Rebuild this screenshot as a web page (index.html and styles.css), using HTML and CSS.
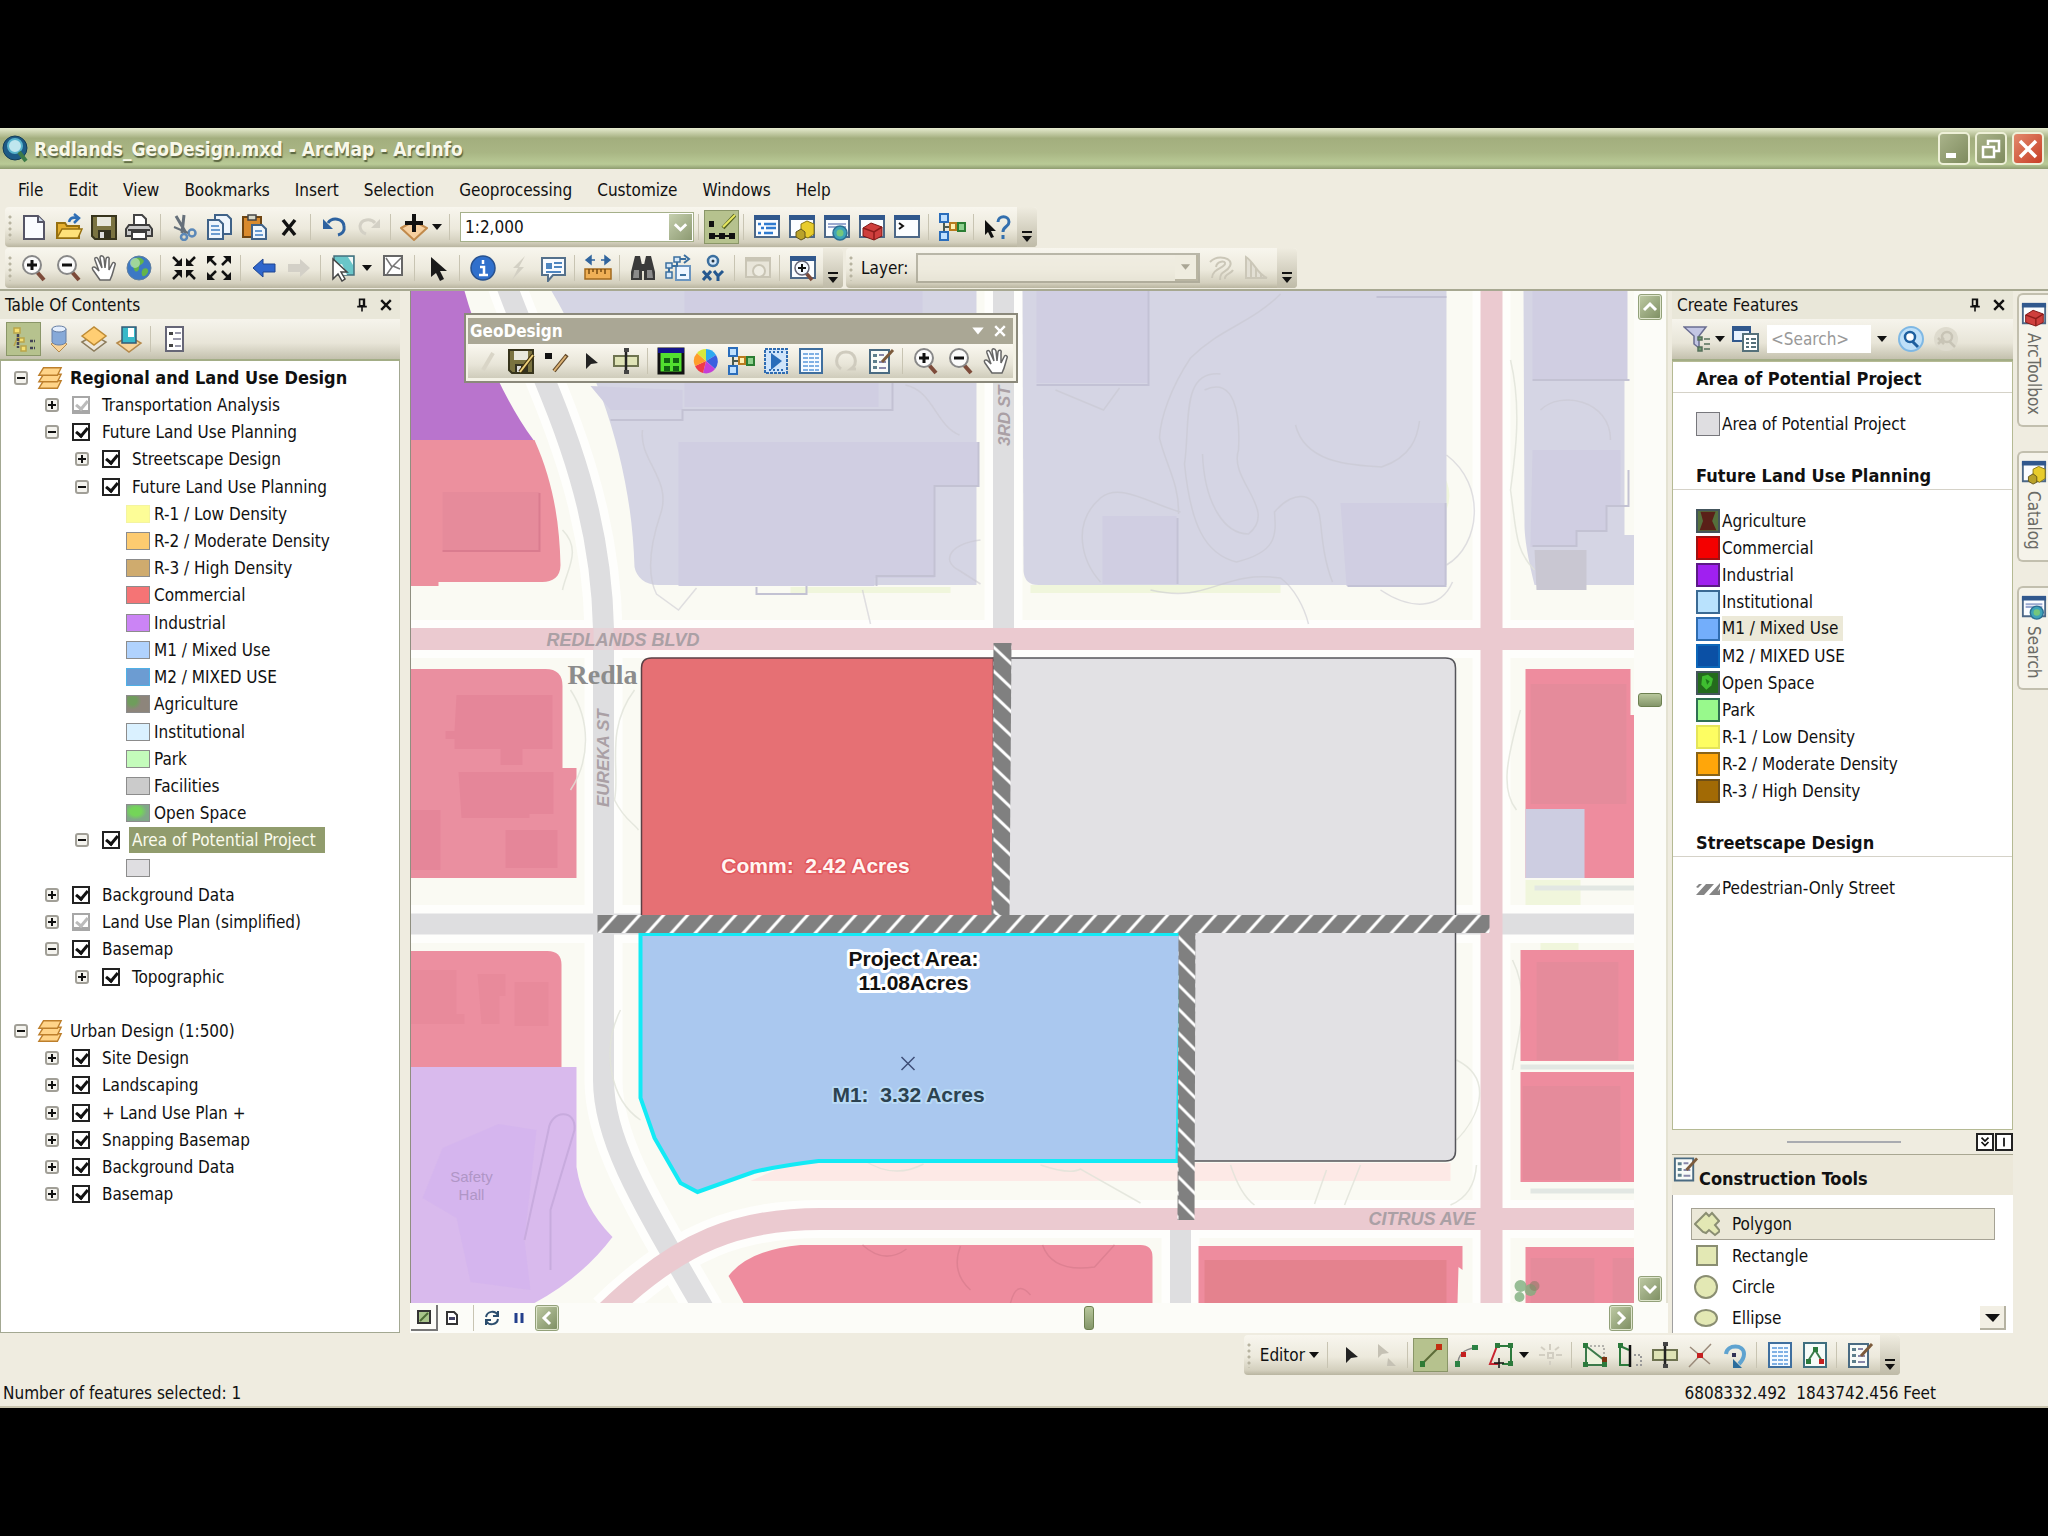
FILE: index.html
```html
<!DOCTYPE html>
<html lang="en">
<head>
    <meta charset="utf-8">
    <title>Redlands_GeoDesign.mxd - ArcMap - ArcInfo</title>
    <link rel="stylesheet" href="styles.css">
</head>
<body>
    <!-- icon sprite -->
    <svg class="sprite" aria-hidden="true">
        <symbol id="i-new" viewBox="0 0 28 28"><path d="M4 3h14l6 6v17H4z" fill="#fafcff" stroke="#556" stroke-width="2"/><path d="M18 3v6h6" fill="#cfdcec" stroke="#556" stroke-width="2"/></symbol>
        <symbol id="i-open" viewBox="0 0 28 28"><path d="M2 25V10h8l2 3h12v12z" fill="#e6b030" stroke="#97700f" stroke-width="2"/><path d="M2 25l5-9h20l-4 9z" fill="#ffe27a" stroke="#97700f" stroke-width="1.5"/><path d="M14 9c1-4 4-5 8-4M19 1l5 4-5 5" fill="none" stroke="#2f6fb5" stroke-width="2.5"/></symbol>
        <symbol id="i-save" viewBox="0 0 28 28"><path d="M2 3h24v23H5l-3-3z" fill="#7a7340" stroke="#37341c" stroke-width="2"/><path d="M7 4h14v9H7z" fill="#e8e8dc"/><path d="M8 17h13v8H8z" fill="#33311f"/><path d="M10 19h4v6h-4z" fill="#ddd"/></symbol>
        <symbol id="i-print" viewBox="0 0 28 28"><path d="M9 12V2h8l4 4v6" fill="#fff" stroke="#444" stroke-width="2"/><path d="M4 12h20l3 4v7H1v-7z" fill="#c9c9c9" stroke="#3d3d3d" stroke-width="2"/><path d="M7 19h14v7H7z" fill="#fff" stroke="#3d3d3d" stroke-width="2"/><path d="M3 17h22" stroke="#3d3d3d" stroke-width="2"/></symbol>
        <symbol id="i-cut" viewBox="0 0 28 28"><path d="M6 3l10 17M14 2l-2 18" stroke="#66707a" stroke-width="3" fill="none"/><circle cx="22" cy="20" r="3.5" fill="none" stroke="#5b88b8" stroke-width="2.5"/><circle cx="14" cy="24" r="3" fill="none" stroke="#5b88b8" stroke-width="2.5"/><path d="M4 14l14 6" stroke="#66707a" stroke-width="2"/></symbol>
        <symbol id="i-copy" viewBox="0 0 28 28"><path d="M10 2h12l4 4v15H10z" fill="#eef5fc" stroke="#3f6288" stroke-width="2"/><path d="M3 7h11l4 4v15H3z" fill="#eef5fc" stroke="#3f6288" stroke-width="2"/><path d="M6 13h8M6 17h9M6 21h9" stroke="#6a9bd0" stroke-width="2"/></symbol>
        <symbol id="i-paste" viewBox="0 0 28 28"><path d="M3 4h18v20H3z" fill="#d98a2d" stroke="#6f4512" stroke-width="2"/><path d="M8 2h8v5H8z" fill="#d8d8c8" stroke="#444" stroke-width="1.5"/><path d="M12 12h10l4 4v10H12z" fill="#eef5fc" stroke="#3f6288" stroke-width="2"/><path d="M15 18h7M15 22h8" stroke="#6a9bd0" stroke-width="2"/></symbol>
        <symbol id="i-delete" viewBox="0 0 28 28"><path d="M8 7l12 15M20 7L8 22" stroke="#111" stroke-width="3.5"/></symbol>
        <symbol id="i-undo" viewBox="0 0 28 28"><path d="M8 10c4-6 15-5 16 3 1 5-2 8-6 9" fill="none" stroke="#2d62a0" stroke-width="3"/><path d="M3 6v10h10z" fill="#2d62a0"/></symbol>
        <symbol id="i-redo" viewBox="0 0 28 28"><path d="M20 10C16 5 6 6 5 13c0 5 3 7 6 8" fill="none" stroke="#d3d0c5" stroke-width="3"/><path d="M25 6v9h-9z" fill="#d3d0c5"/></symbol>
        <symbol id="i-add" viewBox="0 0 28 28"><path d="M1 15l13-7 13 7-13 12z" fill="#f6d0a0" stroke="#c18a4c" stroke-width="2"/><path d="M14 1v18M5 10h18" stroke="#111" stroke-width="4"/></symbol>
        <symbol id="i-edit" viewBox="0 0 28 28"><path d="M1 8h5v6H1zM1 20h6v6H1zM11 20h6v6h-6zM21 20h6v6h-6z" fill="#111"/><path d="M5 23h20" stroke="#111" stroke-width="2"/><path d="M15 15L27 2" stroke="#53611f" stroke-width="4"/><path d="M15 14L27 2" stroke="#e8e860" stroke-width="2"/></symbol>
        <symbol id="i-win" viewBox="0 0 28 28"><path d="M2 4h24v20H2z" fill="#fbfdff" stroke="#4d6887" stroke-width="2"/><path d="M1 2h26v5H1z" fill="#31588d"/></symbol>
        <symbol id="i-toc" viewBox="0 0 28 28"><use href="#i-win"/><path d="M5 11h3M11 11h12M8 15h3M13 15h10M5 20h3M11 20h9" stroke="#2f7bd0" stroke-width="2.5"/></symbol>
        <symbol id="i-catalog" viewBox="0 0 28 28"><use href="#i-win"/><path d="M13 11l6-3 7 3v10l-6 4-7-3z" fill="#e8cc2c" stroke="#8a7711"/><path d="M8 19l5-3 4 3v6l-4 2-5-3z" fill="#b9a22a" stroke="#62551a"/></symbol>
        <symbol id="i-search" viewBox="0 0 28 28"><use href="#i-win"/><path d="M5 11h18M5 14h18" stroke="#9aa9d0" stroke-width="2"/><circle cx="17" cy="20" r="7" fill="#3fa3b8" stroke="#2a6f93" stroke-width="1.5"/><circle cx="17" cy="20" r="3.5" fill="#74c77c"/></symbol>
        <symbol id="i-toolbox" viewBox="0 0 28 28"><use href="#i-win"/><path d="M5 15l8-5 11 4v9l-8 4-11-4z" fill="#cf3f3d" stroke="#7d1614"/><path d="M5 15l11 4 8-5M16 19v8" fill="none" stroke="#8d1c1a" stroke-width="1.5"/></symbol>
        <symbol id="i-python" viewBox="0 0 28 28"><use href="#i-win"/><path d="M6 10l4 3-4 3" fill="none" stroke="#111" stroke-width="2"/></symbol>
        <symbol id="i-model" viewBox="0 0 28 28"><path d="M6 8v12M6 14h16" stroke="#4b5b50" stroke-width="2"/><path d="M2 1h8v8H2zM2 19h8v8H2z" fill="#bfe0ff" stroke="#2a6dbb" stroke-width="2"/><path d="M12 10h6v7h-6z" fill="#fff0b0" stroke="#b97b1f" stroke-width="2"/><path d="M20 10h7v8h-7z" fill="#8fd08f" stroke="#2b7d33" stroke-width="2"/></symbol>
        <symbol id="i-help" viewBox="0 0 28 28"><path d="M2 7v15l3-3 3 6 3-1-3-6h5z" fill="#111"/><path d="M15 9c0-7 11-7 11 0 0 5-6 4-6 10M20 22v4" fill="none" stroke="#336fae" stroke-width="3"/></symbol>
        <symbol id="i-zoomin" viewBox="0 0 28 28"><path d="M17 18l7 8" stroke="#7d4b3a" stroke-width="4"/><circle cx="12" cy="11" r="9" fill="#fbfbfb" stroke="#888" stroke-width="2"/><path d="M12 6v10M7 11h10" stroke="#111" stroke-width="3"/></symbol>
        <symbol id="i-zoomout" viewBox="0 0 28 28"><path d="M17 18l7 8" stroke="#7d4b3a" stroke-width="4"/><circle cx="12" cy="11" r="9" fill="#fbfbfb" stroke="#888" stroke-width="2"/><path d="M7 11h10" stroke="#111" stroke-width="3"/></symbol>
        <symbol id="i-hand" viewBox="0 0 28 28"><path d="M10 26L3 16c-2-3 1-4 3-2l3 3-4-11c-1-3 2-3 3-1l4 9-2-10c0-3 3-3 4 0l1 10 1-9c1-3 4-2 3 1l0 10 3-6c1-3 4-1 3 1-2 6-2 9-5 15z" fill="#fff" stroke="#666" stroke-width="1.5"/></symbol>
        <symbol id="i-globe" viewBox="0 0 28 28"><circle cx="14" cy="14" r="12" fill="#3c78c4" stroke="#5f7f9f"/><path d="M7 6c5-4 10-3 12 1-1 4-5 3-5 7s-4 5-5 1-5-4-2-9zM18 15c3-2 6 0 5 3s-5 6-6 3 0-4 1-6z" fill="#63b54a"/><circle cx="10" cy="9" r="5" fill="#c9ecd0" opacity=".6"/></symbol>
        <symbol id="i-fixin" viewBox="0 0 28 28"><path d="M3 3l6 6M25 3l-6 6M3 25l6-6M25 25l-6-6" stroke="#111" stroke-width="2.5"/><path d="M12 4v8H4zM16 4v8h8zM12 24v-8H4zM16 24v-8h8z" fill="#111"/></symbol>
        <symbol id="i-fixout" viewBox="0 0 28 28"><path d="M4 4l7 7M24 4l-7 7M4 24l7-7M24 24l-7-7" stroke="#111" stroke-width="2.5"/><path d="M2 2h8l-8 8zM26 2h-8l8 8zM2 26h8l-8-8zM26 26h-8l8-8z" fill="#111"/></symbol>
        <symbol id="i-back" viewBox="0 0 28 28"><path d="M3 14l10-9v5h12v8H13v5z" fill="#2f66cc" stroke="#1e4590"/></symbol>
        <symbol id="i-fwd" viewBox="0 0 28 28"><path d="M25 14L15 5v5H3v8h12v5z" fill="#d3d0c7"/></symbol>
        <symbol id="i-selfeat" viewBox="0 0 28 28"><path d="M4 2h20v19H4z" fill="#6ac6c9" stroke="#44707e" stroke-width="1.5"/><path d="M4 12l8-2 5 11H4z" fill="#f0f8f8"/><path d="M18 3h5v8z" fill="#f0f8f8"/><path d="M3 5v20l5-5 4 7 3-2-4-7h6z" fill="#fff" stroke="#444" stroke-width="1.5"/></symbol>
        <symbol id="i-clear" viewBox="0 0 28 28"><path d="M5 2h18v19H5z" fill="#fff" stroke="#666" stroke-width="2"/><path d="M7 4l6 9 9-9M13 13l-5 7M14 12l7 3" fill="none" stroke="#777" stroke-width="1.5"/></symbol>
        <symbol id="i-pointer" viewBox="0 0 28 28"><path d="M7 3v20l5-4 4 8 4-2-4-8h7z" fill="#1a1a1a"/></symbol>
        <symbol id="i-info" viewBox="0 0 28 28"><circle cx="14" cy="14" r="12" fill="#3070cc" stroke="#27518e" stroke-width="1.5"/><path d="M14 6v4M11 13h4v8M10 21h9" fill="none" stroke="#fff" stroke-width="2.5"/></symbol>
        <symbol id="i-bolt" viewBox="0 0 28 28"><path d="M21 2L9 14h5L8 26l12-13h-5z" fill="#d3d0c4"/></symbol>
        <symbol id="i-popup" viewBox="0 0 28 28"><path d="M3 4h23v17H14l-5 6v-6H3z" fill="#f8fbff" stroke="#54708b" stroke-width="2"/><path d="M7 9h6v6H7z" fill="#4f86c0"/><path d="M15 9h8M15 13h8M7 18h15" stroke="#4f86c0" stroke-width="2"/></symbol>
        <symbol id="i-measure" viewBox="0 0 28 28"><path d="M2 6l5-4v8zM26 6l-5-4v8zM6 6h5M17 6h5" fill="#31659e" stroke="#31659e" stroke-width="1.5"/><path d="M1 15h26v10H1z" fill="#efb056" stroke="#a2691e" stroke-width="1.5"/><path d="M5 15v5M9 15v3M13 15v5M17 15v3M21 15v5" stroke="#7a4c10" stroke-width="1.5"/></symbol>
        <symbol id="i-find" viewBox="0 0 28 28"><path d="M6 2h5l2 9v15H2v-8zM22 2h-5l-2 9v15h11v-8z" fill="#3a3a3a"/><path d="M12 10h4v7h-4z" fill="#3a3a3a"/><path d="M5 16h5v8H4zM18 16h5l1 8h-6z" fill="#8b8b8b"/></symbol>
        <symbol id="i-route" viewBox="0 0 28 28"><path d="M12 12h14v14H12z" fill="#eef6ff" stroke="#6b95bf" stroke-width="2"/><path d="M5 20v-8h8V5h9M20 1l5 4-5 4" fill="none" stroke="#3b6f9f" stroke-width="2"/><path d="M2 18h6v6H2zM2 9h6v5H2zM10 3h6v5h-6z" fill="#d7e8f8" stroke="#3b6f9f" stroke-width="1.5"/><path d="M16 21h6" stroke="#3b6f9f" stroke-width="2"/></symbol>
        <symbol id="i-xy" viewBox="0 0 28 28"><circle cx="14" cy="7" r="5" fill="#d7e8f8" stroke="#3b6f9f" stroke-width="2.5"/><circle cx="14" cy="7" r="1.5" fill="#234"/><path d="M4 17l8 9M12 17l-8 9M15 17l4 5 5-5M19 21v6" fill="none" stroke="#25588f" stroke-width="3"/></symbol>
        <symbol id="i-time" viewBox="0 0 28 28"><path d="M2 4h24v19H2z" fill="#e8e5d9" stroke="#c9c5b5" stroke-width="2"/><path d="M2 6h24" stroke="#c9c5b5" stroke-width="3"/><circle cx="15" cy="17" r="6" fill="#efede3" stroke="#c9c5b5" stroke-width="2"/></symbol>
        <symbol id="i-viewer" viewBox="0 0 28 28"><use href="#i-win"/><path d="M17 19l6 7" stroke="#7d4b3a" stroke-width="3.5"/><circle cx="13" cy="14" r="7" fill="#f5f9ff" stroke="#667" stroke-width="1.5"/><path d="M13 10v8M9 14h8" stroke="#111" stroke-width="2"/></symbol>
        <symbol id="i-contour" viewBox="0 0 28 28"><path d="M3 8c8-8 24-4 20 4s-10 4-10 14M5 24c0-9 12-10 13-14s-8-3-9 3M18 25c-1-5 6-5 8-9" fill="none" stroke="#cbc7b8" stroke-width="2"/></symbol>
        <symbol id="i-profile" viewBox="0 0 28 28"><path d="M4 3v21h21C15 20 12 8 4 3zM9 8v16M14 14v10M19 20v4" fill="#e2dfd4" stroke="#cbc7b8" stroke-width="2"/></symbol>
        <symbol id="i-bysrc" viewBox="0 0 28 28"><path d="M6 19l8-5 8 5-8 8z" fill="#f8d49a" stroke="#b58a4c"/><path d="M7 4v13c2 4 12 4 14 0V4z" fill="#86a9d8" stroke="#667fa5"/><ellipse cx="14" cy="4" rx="7" ry="3" fill="#e4eefc" stroke="#667fa5"/></symbol>
        <symbol id="i-byvis" viewBox="0 0 28 28"><path d="M2 17l12-7 12 7-12 9z" fill="#ece7db" stroke="#8d7d5d" stroke-width="1.5"/><path d="M2 11l12-9 12 9-12 9z" fill="#ffce73" stroke="#bd8b35" stroke-width="1.5"/></symbol>
        <symbol id="i-bysel" viewBox="0 0 28 28"><path d="M2 18l12-7 12 7-12 9z" fill="#f8d49a" stroke="#b58a4c" stroke-width="1.5"/><path d="M7 2h14v16H7z" fill="#38b9c9" stroke="#335a76" stroke-width="1.5"/><path d="M13 3h6v9h-6z" fill="#fff"/></symbol>
        <symbol id="i-byorder" viewBox="0 0 28 28"><path d="M4 21l4-10M4 3h6v5H4zM9 13h5v4H9zM11 21h5v5h-5z" fill="#f5df70" stroke="#b9a54a" stroke-width="1.5"/><path d="M8 9v14M20 16h5M20 23h5" stroke="#445" stroke-width="2.5" stroke-dasharray="3 1"/></symbol>
        <symbol id="i-options" viewBox="0 0 28 28"><path d="M6 2h17v24H6z" fill="#fff" stroke="#667" stroke-width="2"/><path d="M9 7h4v3H9zM9 19h4v3H9z" fill="#444"/><path d="M15 8h6M13 14h8M15 21h6" stroke="#99a" stroke-width="2"/></symbol>
        <symbol id="i-frame" viewBox="0 0 28 28"><g fill="#ffd489" stroke="#bd7f2c" stroke-width="1.5"><path d="M7 17h19l-4 8H2z"/><path d="M7 10h19l-4 8H2z"/><path d="M7 3h19l-4 8H2z"/></g></symbol>
        <symbol id="i-pencil" viewBox="0 0 28 28"><path d="M11 23L21 6" stroke="#d9d5c7" stroke-width="4"/></symbol>
        <symbol id="i-saveedit" viewBox="0 0 28 28"><use href="#i-save"/><path d="M13 25L26 8" stroke="#41300f" stroke-width="4"/><path d="M13 25L26 8" stroke="#eed27b" stroke-width="2"/></symbol>
        <symbol id="i-sketch" viewBox="0 0 28 28"><path d="M3 6h7v6H3z" fill="#111"/><path d="M12 24L25 8" stroke="#614727" stroke-width="4"/><path d="M12 24L24 9" stroke="#dcb375" stroke-width="2"/></symbol>
        <symbol id="i-arrow" viewBox="0 0 28 28"><path d="M9 6v16l5-5 7-1z" fill="#222"/></symbol>
        <symbol id="i-arrow2" viewBox="0 0 28 28"><path d="M6 3v14l4-4 7-1zM16 17l8 8h-9z" fill="#c5c1b4"/></symbol>
        <symbol id="i-split" viewBox="0 0 28 28"><path d="M2 9h24v10H2z" fill="#dfe3b6" stroke="#6e7350" stroke-width="2"/><path d="M14 2v24" stroke="#222" stroke-width="2.5"/><path d="M12 1h5v4h-5zM12 23h5v4h-5z" fill="#444"/></symbol>
        <symbol id="i-grid" viewBox="0 0 28 28"><path d="M2 2h24v24H2z" fill="#52e02f" stroke="#111" stroke-width="3"/><path d="M1 1h26v5H1z" fill="#14148a"/><path d="M7 11h6v5H7zM16 11h6v5h-6zM7 19h6v5H7zM16 19h6v5h-6z" fill="#126312"/></symbol>
        <symbol id="i-color" viewBox="0 0 28 28"><path d="M14 14V2a12 12 0 0 1 10 6z" fill="#2fa9f0"/><path d="M14 14l10-6a12 12 0 0 1-1 14z" fill="#3a5fe0"/><path d="M14 14l9 8a12 12 0 0 1-12 4z" fill="#c33fd8"/><path d="M14 14l-3 12A12 12 0 0 1 3 19z" fill="#f03a48"/><path d="M14 14L3 19A12 12 0 0 1 5 6z" fill="#ff9d2b"/><path d="M14 14L5 6a12 12 0 0 1 9-4z" fill="#d8e83c"/></symbol>
        <symbol id="i-run" viewBox="0 0 28 28"><path d="M3 2h22v24H3z" fill="#cfe4fa" stroke="#2f6cb2" stroke-width="2" stroke-dasharray="3 1"/><path d="M7 5h14M7 23h14" stroke="#2f6cb2" stroke-width="2" stroke-dasharray="2 2"/><path d="M9 6l11 8-11 9z" fill="#2a6dba"/></symbol>
        <symbol id="i-table" viewBox="0 0 28 28"><path d="M3 2h22v24H3z" fill="#f5faff" stroke="#3f6f9f" stroke-width="2"/><path d="M6 7h16M6 11h16M6 15h16M6 19h16M6 23h16" stroke="#7fb0e4" stroke-width="2" stroke-dasharray="5 1"/></symbol>
        <symbol id="i-loop" viewBox="0 0 28 28"><path d="M9 22C1 16 5 5 14 5s13 11 5 17h5" fill="none" stroke="#cfcbbe" stroke-width="3"/></symbol>
        <symbol id="i-attr" viewBox="0 0 28 28"><path d="M3 3h19v23H3z" fill="#f8fbf8" stroke="#4a6b82" stroke-width="2"/><path d="M6 7h4v3H6zM6 13h4v3H6zM6 19h4v3H6z" fill="#5d7f8c"/><path d="M12 8h5M12 15h7M12 21h7" stroke="#88a" stroke-width="2"/><path d="M15 15L26 3" stroke="#7c5b3c" stroke-width="3"/></symbol>
        <symbol id="i-seg" viewBox="0 0 28 28"><path d="M6 22L22 6" stroke="#5b6b38" stroke-width="2"/><path d="M3 20h5v6H3z" fill="#2f7b35"/><path d="M19 3h6v6h-6z" fill="#c22f12"/></symbol>
        <symbol id="i-arc" viewBox="0 0 28 28"><path d="M6 23c0-9 6-15 17-16" fill="none" stroke="#888" stroke-width="1.5"/><path d="M3 20h5v6H3zM20 4h6v5h-6z" fill="#2c8244"/><path d="M9 11h5v5H9z" fill="#c42020"/></symbol>
        <symbol id="i-trace" viewBox="0 0 28 28"><path d="M10 5L3 23h8" fill="none" stroke="#c8232e" stroke-width="2"/><path d="M10 5h14v18h-9" fill="none" stroke="#2c7a3c" stroke-width="2"/><path d="M8 2h5v5H8zM21 2h5v5h-5zM21 20h5v5h-5z" fill="#2c7a3c"/><path d="M12 17v10M7 22h10" stroke="#111" stroke-width="1.5"/></symbol>
        <symbol id="i-point" viewBox="0 0 28 28"><path d="M12 12h5v5h-5zM14 3v6M14 20v4M3 14h6M20 14h6M5 6l4 3M23 6l-4 3" fill="none" stroke="#d2cec2" stroke-width="2"/></symbol>
        <symbol id="i-reshape" viewBox="0 0 28 28"><path d="M5 5l18 14v5H5z" fill="#eef3de" stroke="#3b7a4a" stroke-width="2"/><path d="M5 5h18v14" fill="none" stroke="#777" stroke-dasharray="2 2"/><path d="M2 2h5v5H2zM2 21h5v5H2zM21 21h5v5h-5z" fill="#2c7a3c"/><path d="M21 16h5v5h-5z" fill="#7b3412"/></symbol>
        <symbol id="i-cutpoly" viewBox="0 0 28 28"><path d="M4 5v19h9M4 5l9 4" fill="none" stroke="#2c7a3c" stroke-width="2"/><path d="M14 4v22" stroke="#111" stroke-width="2.5"/><path d="M18 14h7v10h-7" fill="none" stroke="#999" stroke-width="2" stroke-dasharray="2 2"/><path d="M2 2h5v5H2z" fill="#2c7a3c"/></symbol>
        <symbol id="i-inter" viewBox="0 0 28 28"><path d="M4 6l20 17M3 26L25 3" stroke="#9a8a7a" stroke-width="1.5"/><path d="M11 12h6v5h-6z" fill="#c42020"/></symbol>
        <symbol id="i-rotate" viewBox="0 0 28 28"><path d="M5 13c1-10 18-10 18 0 0 4-2 7-5 10" fill="none" stroke="#5fa3d0" stroke-width="4"/><path d="M12 18v9h9z" fill="#2a6d9c"/><path d="M11 12h4v4h-4z" fill="#335"/></symbol>
        <symbol id="i-vertex" viewBox="0 0 28 28"><path d="M3 2h22v24H3z" fill="#f6fbf8" stroke="#3f6f7f" stroke-width="2"/><path d="M7 20l7-11 7 11" fill="none" stroke="#3b7a4a" stroke-width="2"/><path d="M5 18h5v5H5zM12 6h5v5h-5z" fill="#2c7a3c"/><path d="M18 18h5v5h-5z" fill="#c42020"/></symbol>
        <symbol id="i-filter" viewBox="0 0 28 28"><path d="M1 2h22l-7 9v12l-5-4v-8z" fill="#c3c6e4" stroke="#6a6d91" stroke-width="1.5"/><path d="M15 12h4v3h-4zM15 22h4v4h-4zM21 14h6M21 19h6M21 24h6" fill="#6f9b72" stroke="#55705b" stroke-width="1.5"/></symbol>
        <symbol id="i-templ" viewBox="0 0 28 28"><path d="M1 2h17v14H1z" fill="#e8f2ff" stroke="#31588d" stroke-width="2"/><path d="M1 4h17" stroke="#31588d" stroke-width="4"/><path d="M11 9h15v17H11z" fill="#fff" stroke="#55707a" stroke-width="2"/><path d="M14 14h3M19 14h5M14 18h3M19 18h5M14 22h3M19 22h5" stroke="#55707a" stroke-width="2"/></symbol>
        <symbol id="i-lens" viewBox="0 0 28 28"><circle cx="14" cy="14" r="12" fill="#bfe0f8" stroke="#7fb8e4" stroke-width="2"/><path d="M15 16l6 6" stroke="#1d5f9f" stroke-width="3"/><circle cx="13" cy="12" r="5" fill="#fff" stroke="#1d5f9f" stroke-width="2.5"/></symbol>
        <symbol id="i-lensoff" viewBox="0 0 28 28"><circle cx="14" cy="14" r="12" fill="#dedbce"/><path d="M17 16l6 6M6 13l6 6M12 13l-6 6" stroke="#c8c4b6" stroke-width="2.5"/><circle cx="15" cy="12" r="5" fill="none" stroke="#c8c4b6" stroke-width="2.5"/></symbol>
        <symbol id="i-pin" viewBox="0 0 20 20"><path d="M7 3h6v8H7zM4 12h12M10 12v6M12 3v8" fill="none" stroke="#111" stroke-width="2"/></symbol>
        <symbol id="i-x" viewBox="0 0 20 20"><path d="M4 4l12 12M16 4L4 16" stroke="currentColor" stroke-width="3"/></symbol>
        <symbol id="i-over" viewBox="0 0 12 14"><path d="M1 2h10" stroke="#111" stroke-width="2"/><path d="M1 6h10l-5 6z" fill="#111"/></symbol>
        <symbol id="i-caret" viewBox="0 0 12 14"><path d="M1 4h10l-5 6z" fill="currentColor"/></symbol>
        <symbol id="i-chev" viewBox="0 0 20 20"><path d="M4 7l6 6 6-6" fill="none" stroke="#fff" stroke-width="3"/></symbol>
        <symbol id="s-tree" viewBox="0 0 24 24"><path d="M0 0h24v24H0z" fill="#246b1c"/><path d="M5 4l7-2 6 5-2 8-6 5-6-6z" fill="#3fbd30"/><path d="M9 7l5 3-3 4z" fill="#1d7a1a"/></symbol>
        <symbol id="s-agri" viewBox="0 0 24 24"><path d="M0 0h24v24H0z" fill="#55703c"/><path d="M3 1h18l-4 11 5 11H2l4-11z" fill="#5a2018"/></symbol>
        <pattern id="hatchH" width="24" height="18" patternUnits="userSpaceOnUse" x="597" y="915"><path d="M0 0h24v18H0z" fill="#808080"/><path d="M1 19L19-1" stroke="#fff" stroke-width="3"/></pattern>
        <pattern id="hatchV" width="18" height="24" patternUnits="userSpaceOnUse" x="993" y="643"><path d="M0 0h18v24H0z" fill="#808080"/><path d="M-1 3l20 19" stroke="#fff" stroke-width="3"/></pattern>
        <pattern id="hatchW" width="17" height="24" patternUnits="userSpaceOnUse" x="1178" y="933"><path d="M0 0h17v24H0z" fill="#808080"/><path d="M-1 3l19 19" stroke="#fff" stroke-width="3"/></pattern>
    </svg>

    <div class="window">
        <header class="titlebar">
            <svg class="icon" viewBox="0 0 28 28"><circle cx="14" cy="13" r="12" fill="#1d5b86" stroke="#143d58"/><circle cx="14" cy="11" r="7" fill="#bfe6ee" stroke="#57b3cc" stroke-width="2"/><path d="M18 17l7 9" stroke="#3d7a48" stroke-width="4"/></svg>
            <h1>Redlands_GeoDesign.mxd - ArcMap - ArcInfo</h1>
            <button class="win-btn" aria-label="Minimize"><svg viewBox="0 0 28 28"><path d="M6 18h10v5H6z" fill="#fff"/></svg></button>
            <button class="win-btn" aria-label="Restore"><svg viewBox="0 0 28 28"><path d="M11 10V6h11v10h-4M6 12h11v10H6z" fill="none" stroke="#fff" stroke-width="2.5"/></svg></button>
            <button class="win-btn close" aria-label="Close"><svg viewBox="0 0 28 28"><path d="M6 6l16 16M22 6L6 22" stroke="#fff" stroke-width="3.5"/></svg></button>
        </header>

        <nav class="menubar">
            <button>File</button><button>Edit</button><button>View</button><button>Bookmarks</button><button>Insert</button><button>Selection</button><button>Geoprocessing</button><button>Customize</button><button>Windows</button><button>Help</button>
        </nav>

        <div class="toolbar-row">
            <div class="toolbar">
                <span class="grip"></span>
                <button class="tool" aria-label="New"><svg class="icon"><use href="#i-new"/></svg></button>
                <button class="tool" aria-label="Open"><svg class="icon"><use href="#i-open"/></svg></button>
                <button class="tool" aria-label="Save"><svg class="icon"><use href="#i-save"/></svg></button>
                <button class="tool" aria-label="Print"><svg class="icon"><use href="#i-print"/></svg></button>
                <span class="sep"></span>
                <button class="tool" aria-label="Cut"><svg class="icon"><use href="#i-cut"/></svg></button>
                <button class="tool" aria-label="Copy"><svg class="icon"><use href="#i-copy"/></svg></button>
                <button class="tool" aria-label="Paste"><svg class="icon"><use href="#i-paste"/></svg></button>
                <button class="tool" aria-label="Delete"><svg class="icon"><use href="#i-delete"/></svg></button>
                <span class="sep"></span>
                <button class="tool" aria-label="Undo"><svg class="icon"><use href="#i-undo"/></svg></button>
                <button class="tool" aria-label="Redo"><svg class="icon"><use href="#i-redo"/></svg></button>
                <span class="sep"></span>
                <button class="tool" aria-label="Add Data"><svg class="icon"><use href="#i-add"/></svg></button>
                <button class="drop" aria-label="Add Data options"><svg class="caret"><use href="#i-caret"/></svg></button>
                <span class="sep"></span>
                <span class="combo scale">
                    <select aria-label="Map scale"><option>1:2,000</option></select>
                    <svg class="combo-btn"><use href="#i-chev"/></svg>
                </span>
                <span class="sep"></span>
                <button class="tool on" aria-label="Editor Toolbar"><svg class="icon"><use href="#i-edit"/></svg></button>
                <span class="sep"></span>
                <button class="tool" aria-label="Table Of Contents"><svg class="icon"><use href="#i-toc"/></svg></button>
                <button class="tool" aria-label="Catalog window"><svg class="icon"><use href="#i-catalog"/></svg></button>
                <button class="tool" aria-label="Search window"><svg class="icon"><use href="#i-search"/></svg></button>
                <button class="tool" aria-label="ArcToolbox window"><svg class="icon"><use href="#i-toolbox"/></svg></button>
                <button class="tool" aria-label="Python window"><svg class="icon"><use href="#i-python"/></svg></button>
                <span class="sep"></span>
                <button class="tool" aria-label="ModelBuilder"><svg class="icon"><use href="#i-model"/></svg></button>
                <span class="sep"></span>
                <button class="tool" aria-label="What's This?"><svg class="icon"><use href="#i-help"/></svg></button>
                <button class="overflow" aria-label="Toolbar options"><svg class="caret"><use href="#i-over"/></svg></button>
            </div>
        </div>

        <div class="toolbar-row">
            <div class="toolbar">
                <span class="grip"></span>
                <button class="tool" aria-label="Zoom In"><svg class="icon"><use href="#i-zoomin"/></svg></button>
                <button class="tool" aria-label="Zoom Out"><svg class="icon"><use href="#i-zoomout"/></svg></button>
                <button class="tool" aria-label="Pan"><svg class="icon"><use href="#i-hand"/></svg></button>
                <button class="tool" aria-label="Full Extent"><svg class="icon"><use href="#i-globe"/></svg></button>
                <span class="sep"></span>
                <button class="tool" aria-label="Fixed Zoom In"><svg class="icon"><use href="#i-fixin"/></svg></button>
                <button class="tool" aria-label="Fixed Zoom Out"><svg class="icon"><use href="#i-fixout"/></svg></button>
                <span class="sep"></span>
                <button class="tool" aria-label="Previous Extent"><svg class="icon"><use href="#i-back"/></svg></button>
                <button class="tool" aria-label="Next Extent"><svg class="icon"><use href="#i-fwd"/></svg></button>
                <span class="sep"></span>
                <button class="tool" aria-label="Select Features"><svg class="icon"><use href="#i-selfeat"/></svg></button>
                <button class="drop" aria-label="Select options"><svg class="caret"><use href="#i-caret"/></svg></button>
                <button class="tool" aria-label="Clear Selection"><svg class="icon"><use href="#i-clear"/></svg></button>
                <span class="sep"></span>
                <button class="tool" aria-label="Select Elements"><svg class="icon"><use href="#i-pointer"/></svg></button>
                <span class="sep"></span>
                <button class="tool" aria-label="Identify"><svg class="icon"><use href="#i-info"/></svg></button>
                <button class="tool" aria-label="Hyperlink"><svg class="icon"><use href="#i-bolt"/></svg></button>
                <button class="tool" aria-label="HTML Popup"><svg class="icon"><use href="#i-popup"/></svg></button>
                <span class="sep"></span>
                <button class="tool" aria-label="Measure"><svg class="icon"><use href="#i-measure"/></svg></button>
                <span class="sep"></span>
                <button class="tool" aria-label="Find"><svg class="icon"><use href="#i-find"/></svg></button>
                <button class="tool" aria-label="Find Route"><svg class="icon"><use href="#i-route"/></svg></button>
                <button class="tool" aria-label="Go To XY"><svg class="icon"><use href="#i-xy"/></svg></button>
                <span class="sep"></span>
                <button class="tool" aria-label="Time Slider"><svg class="icon"><use href="#i-time"/></svg></button>
                <span class="sep"></span>
                <button class="tool" aria-label="Viewer Window"><svg class="icon"><use href="#i-viewer"/></svg></button>
                <button class="overflow" aria-label="Toolbar options"><svg class="caret"><use href="#i-over"/></svg></button>
            </div>
            <div class="toolbar">
                <span class="grip"></span>
                <label class="tool-label" for="layer">Layer:</label>
                <span class="combo layer">
                    <select id="layer" disabled></select>
                    <svg class="combo-btn"><use href="#i-caret"/></svg>
                </span>
                <button class="tool" aria-label="Contour"><svg class="icon"><use href="#i-contour"/></svg></button>
                <button class="tool" aria-label="Profile"><svg class="icon"><use href="#i-profile"/></svg></button>
                <button class="overflow" aria-label="Toolbar options"><svg class="caret"><use href="#i-over"/></svg></button>
            </div>
        </div>

        <main class="workspace">
            <aside class="toc">
                <div class="panel-title">
                    <h2>Table Of Contents</h2>
                    <button aria-label="Auto hide"><svg><use href="#i-pin"/></svg></button>
                    <button aria-label="Close"><svg><use href="#i-x"/></svg></button>
                </div>
                <div class="panel-tools">
                    <button class="tool on" aria-label="List By Drawing Order"><svg class="icon"><use href="#i-byorder"/></svg></button>
                    <button class="tool" aria-label="List By Source"><svg class="icon"><use href="#i-bysrc"/></svg></button>
                    <button class="tool" aria-label="List By Visibility"><svg class="icon"><use href="#i-byvis"/></svg></button>
                    <button class="tool" aria-label="List By Selection"><svg class="icon"><use href="#i-bysel"/></svg></button>
                    <span class="sep"></span>
                    <button class="tool" aria-label="Options"><svg class="icon"><use href="#i-options"/></svg></button>
                </div>
                <ul class="tree">
                    <li class="l0 active"><button class="exp open" aria-label="Collapse"></button><svg class="frame"><use href="#i-frame"/></svg><span class="name">Regional and Land Use Design</span></li>
                    <li class="l1"><button class="exp" aria-label="Expand"></button><input type="checkbox" id="c1" class="dim" checked><label for="c1">Transportation Analysis</label></li>
                    <li class="l1"><button class="exp open" aria-label="Collapse"></button><input type="checkbox" id="c2" checked><label for="c2">Future Land Use Planning</label></li>
                    <li class="l2"><button class="exp" aria-label="Expand"></button><input type="checkbox" id="c3" checked><label for="c3">Streetscape Design</label></li>
                    <li class="l2"><button class="exp open" aria-label="Collapse"></button><input type="checkbox" id="c4" checked><label for="c4">Future Land Use Planning</label></li>
                    <li class="l3"><span class="swatch low"></span>R-1 / Low Density</li>
                    <li class="l3"><span class="swatch moderate"></span>R-2 / Moderate Density</li>
                    <li class="l3"><span class="swatch high"></span>R-3 / High Density</li>
                    <li class="l3"><span class="swatch commercial"></span>Commercial</li>
                    <li class="l3"><span class="swatch industrial"></span>Industrial</li>
                    <li class="l3"><span class="swatch m1"></span>M1 / Mixed Use</li>
                    <li class="l3"><span class="swatch m2"></span>M2 / MIXED USE</li>
                    <li class="l3"><span class="swatch agriculture"></span>Agriculture</li>
                    <li class="l3"><span class="swatch institutional"></span>Institutional</li>
                    <li class="l3"><span class="swatch park"></span>Park</li>
                    <li class="l3"><span class="swatch facilities"></span>Facilities</li>
                    <li class="l3"><span class="swatch openspace"></span>Open Space</li>
                    <li class="l2 selected"><button class="exp open" aria-label="Collapse"></button><input type="checkbox" id="c5" checked><label for="c5">Area of Potential Project</label></li>
                    <li class="l3"><span class="swatch area"></span></li>
                    <li class="l1"><button class="exp" aria-label="Expand"></button><input type="checkbox" id="c6" checked><label for="c6">Background Data</label></li>
                    <li class="l1"><button class="exp" aria-label="Expand"></button><input type="checkbox" id="c7" class="dim" checked><label for="c7">Land Use Plan (simplified)</label></li>
                    <li class="l1"><button class="exp open" aria-label="Collapse"></button><input type="checkbox" id="c8" checked><label for="c8">Basemap</label></li>
                    <li class="l2"><button class="exp" aria-label="Expand"></button><input type="checkbox" id="c9" checked><label for="c9">Topographic</label></li>
                    <li></li>
                    <li class="l0"><button class="exp open" aria-label="Collapse"></button><svg class="frame"><use href="#i-frame"/></svg><span class="name">Urban Design (1:500)</span></li>
                    <li class="l1"><button class="exp" aria-label="Expand"></button><input type="checkbox" id="c10" checked><label for="c10">Site Design</label></li>
                    <li class="l1"><button class="exp" aria-label="Expand"></button><input type="checkbox" id="c11" checked><label for="c11">Landscaping</label></li>
                    <li class="l1"><button class="exp" aria-label="Expand"></button><input type="checkbox" id="c12" checked><label for="c12">+ Land Use Plan +</label></li>
                    <li class="l1"><button class="exp" aria-label="Expand"></button><input type="checkbox" id="c13" checked><label for="c13">Snapping Basemap</label></li>
                    <li class="l1"><button class="exp" aria-label="Expand"></button><input type="checkbox" id="c14" checked><label for="c14">Background Data</label></li>
                    <li class="l1"><button class="exp" aria-label="Expand"></button><input type="checkbox" id="c15" checked><label for="c15">Basemap</label></li>
                </ul>
            </aside>

            <section class="map">
                <svg class="canvas" viewBox="410 291 1224 1012" preserveAspectRatio="xMidYMid slice">
                    <path d="M410 291h1224v1012H410z" fill="#fafaf3"/>
                    <!-- lawns and planting -->
                    <g fill="#f0f6dc">
                        <path d="M1030 585h250v8h-250zM1440 470q14 20 6 40v60h-6zM790 587h160v6H790zM1525 880h55v26h-55zM1540 941h38v9h-38z"/>
                    </g>
                    <path d="M790 1163h660v18H750z" fill="#fde9e6"/>
                    <!-- streets -->
                    <g fill="none" stroke="#fefefc" stroke-width="38">
                        <path d="M506 285C540 380 600 480 603 629V1080C603 1140 640 1200 705 1312"/>
                        <path d="M410 639h1224M1003 291v350M1491 291v1012M410 924h1224M1180 1219v84"/>
                        <path d="M606 1312C680 1240 740 1219 820 1219h814"/>
                    </g>
                    <g fill="none" stroke="#dedee0" stroke-width="21">
                        <path d="M506 285C540 380 600 480 603 629V1080C603 1140 640 1200 705 1312"/>
                        <path d="M1003 291v350M410 924h1224M1180 1219v84"/>
                    </g>
                    <g fill="none" stroke="#ebcad0" stroke-width="22">
                        <path d="M410 639h1224M1491 291v1012"/>
                        <path d="M606 1312C680 1240 740 1219 820 1219h814"/>
                    </g>
                    <path d="M593 628h20v22h-20z" fill="#dedee0" opacity=".5"/>
                    <!-- industrial and commercial parcels, west side -->
                    <path d="M410 291h54c14 50 40 110 69 149H410z" fill="#b974cd"/>
                    <path d="M410 440h124c18 40 25 80 26 125 0 12-8 17-18 17H438v4h-28z" fill="#ec909e"/>
                    <path d="M442 492h97v58h-97z" fill="#e68b9b"/>
                    <path d="M442 551h97v-58" fill="none" stroke="#da7c8f" stroke-width="2"/>
                    <path d="M410 669h135q17 0 17 17v82h14v110H410z" fill="#ea8fa0"/>
                    <path d="M456 695h96v54h-30v16h-22v-16h-46v-10h-9v-8h9zM458 772h95v42h-24v4h-68zM410 810h30v60h-30zM505 830h52v38h-52z" fill="#e58699"/>
                    <path d="M410 951h137q14 0 14 14v102H410z" fill="#ec8fa0"/>
                    <path d="M410 970h46v44h8v10h-54zM477 974h28v22h-6v28h-18zM514 982h34v44h-34z" fill="#e88a9b"/>
                    <path d="M410 1067h166v100q6 40 36 70-30 40-78 66H410z" fill="#d9baed"/>
                    <path d="M442 1148l56-24 38 6-12 110 6 50-60-8-14-64-34-20z" fill="#d3b4ee" opacity=".7"/>
                    <path d="M524 1240l24-110c2-20 28-22 26 0l-24 80v60" fill="none" stroke="#c8abde" stroke-width="2"/>
                    <!-- institutional blocks, north side -->
                    <path d="M551 291h425v294H658c-14 0-22-8-24-18-3-100-33-190-83-276z" fill="#d5d5e4"/>
                    <path d="M590 386l92 4v20h-72zM684 291h238v40h-44v76H684zM678 442h300v44h-44v92h-60v8H678z" fill="#d0cee2"/>
                    <path d="M610 420h72v-10h210v-30M978 442v44h-44v90h-58v10M756 587v7h50v-8" fill="none" stroke="#c3c2d3" stroke-width="2"/>
                    <path d="M1022 291h424v294h-408q-14 0-15-14z" fill="#d5d5e4"/>
                    <path d="M1036 291h112v92h-112zM1102 516h74v68h-74zM1340 503h104v83h-98z" fill="#d0cee2"/>
                    <path d="M1036 385h112v-94M1177 518v66M1445 503v83h-98M1376 297h70" fill="none" stroke="#c3c2d5" stroke-width="2"/>
                    <path d="M1523 291h101v244h10v50h-100q-10-40-10-60z" fill="#d5d5e4"/>
                    <path d="M1532 291h95v88h-95zM1532 450h88v56h-14v26h-30v15h-46z" fill="#d0cee2"/>
                    <path d="M1532 380h97M1628 470v36h-22v25h-30v15h-44" fill="none" stroke="#c3c2d3" stroke-width="2"/>
                    <path d="M1534 550h52v40h-50z" fill="#c9c7d2"/>
                    <!-- contours -->
                    <g fill="none" stroke="#c8c7d0" stroke-width="1.5" opacity=".55">
                        <path d="M1280 294c-30 30-60 34-90 64-20 30-30 60-31 80 6 26 20 46 19 76M1180 512c-30-8-60-30-80-14-30 26-18 64 0 84M1295 425c10 40 60 40 86 42 30-10 36-30 38-46M1220 374c-40-4-30 50-36 90 6 60 20 90 52 98 40-10 40-26 38-50 20-24 44-20 46 10 2 20 4 40 12 60M1204 390c30-14 36 24 34 60-10 30 40 60 10 84-24 0-44-30-46-80"/>
                        <path d="M1055 390l48 20 16-22M642 430c-4 30 30 50 18 84-10 30-14 60-4 80l22 16 18-22M905 385c28 6 30 40 54 50M980 540c-30 4-40 20-22 30l22 14M1446 455c40 30 34 90 0 110M1150 590c60 14 70-20 130-12 14 10 24 30 28 46M1380 590c30 20 60 20 72-8M1540 410c20-20 70-10 70 30M862 590l8 34"/>
                    </g>
                    <g fill="none" stroke="#e0e2d8" stroke-width="1.5" opacity=".8">
                        <path d="M562 530c20 20 4 40 0 60M634 690c-30 40-14 80-20 110 10 20 20 24 24 30M570 690c20 30 20 70 0 100M1510 360c12 50 4 100 0 130 6 40 4 60 24 80M1520 710c-14 50-20 80-4 100M1456 1060c40 20 20 60 0 80M1326 1170l-12 34M1360 1165l-16 40M1476 1165q-2 30-26 40M863 1160q30 20 60 4M620 1010c-20 40-10 90 20 110M1512 960c20 40 4 80 0 110M1040 1165q30 10 40 4l60 34M1230 1165q10 30 24 40"/>
                    </g>
                    <!-- commercial parcels, east and south -->
                    <g fill="#ee8c9e">
                        <path d="M1525 669h105v46h4v163h-109zM1520 950h114v111h-114zM1520 1072h114v110h-114zM1525 1247h109v56h-109z"/>
                        <path d="M743 1303l-15-27q20-26 72-31h340q12 0 12 12v46zM1198 1246h264v24l-4-3-1 36h-259z"/>
                    </g>
                    <g fill="#e58b9b">
                        <path d="M1530 684h96v120h-96zM1536 962h82v98h-82zM1522 1086h98v94h-98zM1530 1258h64v45h-64zM1612 1258h22v45h-22z"/>
                    </g>
                    <path d="M1204 1260h242v43h-242z" fill="#e4828e"/>
                    <path d="M1525 809h59v69h-59z" fill="#cdcde1"/>
                    <path d="M1534 888h100M1530 1191h104M1520 1067h114" stroke="#e2e7e3" stroke-width="5"/>
                    <path d="M862 1245q22 20 44 4M970 1290q-20-18-10-44M1010 1303q6-24 20-8M1042 1245q10 28 52 22l20-22" fill="none" stroke="#de8192" stroke-width="1.5"/>
                    <g fill="#7fae7e" opacity=".8"><circle cx="1520" cy="1286" r="6"/><circle cx="1530" cy="1290" r="6"/><circle cx="1519" cy="1297" r="5"/></g>
                    <circle cx="1534" cy="1286" r="5" fill="#8d7d68" opacity=".6"/>
                    <!-- project area -->
                    <path d="M993 658h452q10 0 10 10v483q0 10-10 10H1180V924H993z" fill="#e2e1e4" stroke="#55555a" stroke-width="1.5"/>
                    <path d="M651 658h342v260H641V668q0-10 10-10z" fill="#e67074" stroke="#5b4045" stroke-width="1.5"/>
                    <path d="M640 934h541l-4 227H818q-40 5-65 11l-56 20-17-9-26-45-14-40z" fill="#aac8ef" stroke="#13eaf5" stroke-width="4"/>
                    <path d="M597 915h892v18H597z" fill="url(#hatchH)"/>
                    <path d="M993 643h18l-2 272h-18z" fill="url(#hatchV)"/>
                    <path d="M1178 933h17l-1 287h-17z" fill="url(#hatchW)"/>
                    <path d="M901 1057l13 13M914 1057l-13 13" stroke="#3f4f77" stroke-width="1.5"/>
                    <!-- labels -->
                    <g class="street">
                        <text x="546" y="646">REDLANDS BLVD</text>
                        <text x="1368" y="1225">CITRUS AVE</text>
                        <text class="side" transform="translate(608 807) rotate(-90)">EUREKA ST</text>
                        <text class="side" transform="translate(1009 446) rotate(-90)">3RD ST</text>
                    </g>
                    <text class="city" x="567" y="684">Redla</text>
                    <text class="hall" x="471" y="1182">Safety</text>
                    <text class="hall" x="471" y="1200">Hall</text>
                    <text class="acres comm" x="815" y="873" xml:space="preserve">Comm:  2.42 Acres</text>
                    <text class="acres area-label" x="913" y="966">Project Area:</text>
                    <text class="acres area-label" x="913" y="990">11.08Acres</text>
                    <text class="acres m1-label" x="908" y="1102" xml:space="preserve">M1:  3.32 Acres</text>
                </svg>

                <div class="float">
                    <div class="float-title">
                        <h2>GeoDesign</h2>
                        <button aria-label="Options"><svg><use href="#i-caret"/></svg></button>
                        <button aria-label="Close"><svg><use href="#i-x"/></svg></button>
                    </div>
                    <div class="float-tools">
                        <button class="tool" aria-label="Start Editing"><svg class="icon"><use href="#i-pencil"/></svg></button>
                        <button class="tool" aria-label="Save Edits"><svg class="icon"><use href="#i-saveedit"/></svg></button>
                        <button class="tool" aria-label="Create Features"><svg class="icon"><use href="#i-sketch"/></svg></button>
                        <button class="tool" aria-label="Edit Tool"><svg class="icon"><use href="#i-arrow"/></svg></button>
                        <button class="tool" aria-label="Split"><svg class="icon"><use href="#i-split"/></svg></button>
                        <span class="sep"></span>
                        <button class="tool" aria-label="Dashboard"><svg class="icon"><use href="#i-grid"/></svg></button>
                        <button class="tool" aria-label="Symbology"><svg class="icon"><use href="#i-color"/></svg></button>
                        <button class="tool" aria-label="Model"><svg class="icon"><use href="#i-model"/></svg></button>
                        <button class="tool" aria-label="Run"><svg class="icon"><use href="#i-run"/></svg></button>
                        <button class="tool" aria-label="Table"><svg class="icon"><use href="#i-table"/></svg></button>
                        <button class="tool" aria-label="Refresh"><svg class="icon"><use href="#i-loop"/></svg></button>
                        <button class="tool" aria-label="Attributes"><svg class="icon"><use href="#i-attr"/></svg></button>
                        <span class="sep"></span>
                        <button class="tool" aria-label="Zoom In"><svg class="icon"><use href="#i-zoomin"/></svg></button>
                        <button class="tool" aria-label="Zoom Out"><svg class="icon"><use href="#i-zoomout"/></svg></button>
                        <button class="tool" aria-label="Pan"><svg class="icon"><use href="#i-hand"/></svg></button>
                    </div>
                </div>

                <div class="vscroll">
                    <button class="scroll-btn" aria-label="Scroll up"><svg class="up"><use href="#i-chev"/></svg></button>
                    <span class="track"><span class="thumb"></span></span>
                    <button class="scroll-btn" aria-label="Scroll down"><svg><use href="#i-chev"/></svg></button>
                </div>
                <div class="hscroll">
                    <button class="view on" aria-label="Data View"><svg viewBox="0 0 20 20"><path d="M4 4h12v12H4z" fill="#a8c48a" stroke="#333" stroke-width="2"/><path d="M6 14l8-8" stroke="#4d6b35" stroke-width="2"/></svg></button>
                    <button class="view" aria-label="Layout View"><svg viewBox="0 0 20 20"><path d="M5 4h7l3 3v9H5z" fill="#fff" stroke="#333" stroke-width="2"/><path d="M7 9h6v3H7z" fill="#446"/></svg></button>
                    <span class="sep"></span>
                    <button class="view" aria-label="Refresh View"><svg viewBox="0 0 20 20"><path d="M4 9c1-6 9-7 12-2M16 11c-1 6-9 7-12 2M16 3v5h-5M4 17v-5h5" fill="none" stroke="#2b4d6d" stroke-width="2"/></svg></button>
                    <button class="view" aria-label="Pause Drawing"><svg viewBox="0 0 20 20"><path d="M7 5v10M13 5v10" stroke="#233f8c" stroke-width="3"/></svg></button>
                    <button class="scroll-btn" aria-label="Scroll left"><svg class="left"><use href="#i-chev"/></svg></button>
                    <span class="track"><span class="thumb"></span></span>
                    <button class="scroll-btn" aria-label="Scroll right"><svg class="right"><use href="#i-chev"/></svg></button>
                </div>
            </section>

            <aside class="create">
                <div class="panel-title">
                    <h2>Create Features</h2>
                    <button aria-label="Auto hide"><svg><use href="#i-pin"/></svg></button>
                    <button aria-label="Close"><svg><use href="#i-x"/></svg></button>
                </div>
                <div class="panel-tools">
                    <button class="tool" aria-label="Filter"><svg class="icon"><use href="#i-filter"/></svg></button>
                    <button class="drop" aria-label="Filter options"><svg class="caret"><use href="#i-caret"/></svg></button>
                    <button class="tool" aria-label="Organize Templates"><svg class="icon"><use href="#i-templ"/></svg></button>
                    <input type="text" class="search" placeholder="&lt;Search&gt;" aria-label="Search templates">
                    <button class="drop" aria-label="Search history"><svg class="caret"><use href="#i-caret"/></svg></button>
                    <button class="tool" aria-label="Search"><svg class="icon"><use href="#i-lens"/></svg></button>
                    <button class="tool" aria-label="Clear search"><svg class="icon"><use href="#i-lensoff"/></svg></button>
                </div>
                <div class="templates">
                    <h3>Area of Potential Project</h3>
                    <ul>
                        <li><span class="box area"></span><span>Area of Potential Project</span></li>
                    </ul>
                    <h3>Future Land Use Planning</h3>
                    <ul>
                        <li><svg class="box"><use href="#s-agri"/></svg><span>Agriculture</span></li>
                        <li><span class="box b-commercial"></span><span>Commercial</span></li>
                        <li><span class="box b-industrial"></span><span>Industrial</span></li>
                        <li><span class="box b-institutional"></span><span>Institutional</span></li>
                        <li class="picked"><span class="box b-m1"></span><span>M1 / Mixed Use</span></li>
                        <li><span class="box b-m2"></span><span>M2 / MIXED USE</span></li>
                        <li><svg class="box"><use href="#s-tree"/></svg><span>Open Space</span></li>
                        <li><span class="box b-park"></span><span>Park</span></li>
                        <li><span class="box b-low"></span><span>R-1 / Low Density</span></li>
                        <li><span class="box b-moderate"></span><span>R-2 / Moderate Density</span></li>
                        <li><span class="box b-high"></span><span>R-3 / High Density</span></li>
                    </ul>
                    <h3>Streetscape Design</h3>
                    <ul class="street-list">
                        <li><svg class="box line" viewBox="0 0 24 24"><path d="M0 19l10-11h8L8 19zM13 19l11-12v3l-4 9zM18 19l6-6v6zM0 11l3-3h3l-4 4z" fill="#858585"/></svg><span>Pedestrian-Only Street</span></li>
                    </ul>
                </div>
                <div class="splitter">
                    <span class="bar"></span>
                    <button aria-label="Collapse"><svg viewBox="0 0 16 16"><path d="M4 3l4 4 4-4M4 8l4 4 4-4" fill="none" stroke="#111" stroke-width="2"/></svg></button>
                    <button aria-label="Restore split"><svg viewBox="0 0 16 16"><path d="M8 3v10" stroke="#111" stroke-width="2"/></svg></button>
                </div>
                <div class="construct-head"><svg class="icon"><use href="#i-attr"/></svg><h2>Construction Tools</h2></div>
                <ul class="construct">
                    <li class="picked"><svg viewBox="0 0 26 26"><path d="M1 13L12 2l3 3 3-3 7 8-4 4 5 6-5 4-6-5-3 3-3-1z" fill="#e3e8b4" stroke="#8a8e72" stroke-width="2"/></svg>Polygon</li>
                    <li><svg viewBox="0 0 26 26"><path d="M3 3h20v19H3z" fill="#e3e8b4" stroke="#8a8e72" stroke-width="2"/></svg>Rectangle</li>
                    <li><svg viewBox="0 0 26 26"><circle cx="12" cy="13" r="11" fill="#e3e8b4" stroke="#8a8e72" stroke-width="2"/></svg>Circle</li>
                    <li><svg viewBox="0 0 26 26"><ellipse cx="12" cy="13" rx="11" ry="8" fill="#e3e8b4" stroke="#8a8e72" stroke-width="2"/></svg>Ellipse</li>
                </ul>
                <button class="more" aria-label="Scroll down"><svg viewBox="0 0 20 20"><path d="M3 7h15l-7 8z" fill="#111"/></svg></button>
            </aside>

            <nav class="tabs">
                <a href="#toolbox"><svg><use href="#i-toolbox"/></svg>ArcToolbox</a>
                <a href="#catalog"><svg><use href="#i-catalog"/></svg>Catalog</a>
                <a href="#search"><svg><use href="#i-search"/></svg>Search</a>
            </nav>
        </main>

        <div class="toolbar-row bottom">
            <div class="toolbar">
                <span class="grip"></span>
                <button class="menu-btn">Editor<svg class="caret"><use href="#i-caret"/></svg></button>
                <span class="sep"></span>
                <button class="tool" aria-label="Edit Tool"><svg class="icon"><use href="#i-arrow"/></svg></button>
                <button class="tool" aria-label="Edit Annotation"><svg class="icon"><use href="#i-arrow2"/></svg></button>
                <span class="sep"></span>
                <button class="tool on" aria-label="Straight Segment"><svg class="icon"><use href="#i-seg"/></svg></button>
                <button class="tool" aria-label="Arc Segment"><svg class="icon"><use href="#i-arc"/></svg></button>
                <button class="tool" aria-label="Trace"><svg class="icon"><use href="#i-trace"/></svg></button>
                <button class="drop" aria-label="Trace options"><svg class="caret"><use href="#i-caret"/></svg></button>
                <button class="tool" aria-label="Point"><svg class="icon"><use href="#i-point"/></svg></button>
                <span class="sep"></span>
                <button class="tool" aria-label="Reshape"><svg class="icon"><use href="#i-reshape"/></svg></button>
                <button class="tool" aria-label="Cut Polygons"><svg class="icon"><use href="#i-cutpoly"/></svg></button>
                <button class="tool" aria-label="Split"><svg class="icon"><use href="#i-split"/></svg></button>
                <button class="tool" aria-label="Intersection"><svg class="icon"><use href="#i-inter"/></svg></button>
                <button class="tool" aria-label="Rotate"><svg class="icon"><use href="#i-rotate"/></svg></button>
                <span class="sep"></span>
                <button class="tool" aria-label="Attributes"><svg class="icon"><use href="#i-table"/></svg></button>
                <button class="tool" aria-label="Sketch Properties"><svg class="icon"><use href="#i-vertex"/></svg></button>
                <span class="sep"></span>
                <button class="tool" aria-label="Create Features"><svg class="icon"><use href="#i-attr"/></svg></button>
                <button class="overflow" aria-label="Toolbar options"><svg class="caret"><use href="#i-over"/></svg></button>
            </div>
        </div>

        <footer class="status">
            <span>Number of features selected: 1</span>
            <span class="coords">6808332.492&nbsp; 1843742.456 Feet</span>
        </footer>
    </div>
</body>
</html>
```

FILE: styles.css
```css
* {
    box-sizing: border-box;
}
body {
    margin: 0;
    min-height: 100vh;
    padding: 128px 0;
    display: flex;
    background: #000;
    color: #111;
    font-family: "DejaVu Sans Condensed", "DejaVu Sans", Tahoma, sans-serif;
    font-size: 17px;
    line-height: 20px;
}
button {
    font: inherit;
    color: inherit;
    background: none;
    border: none;
    padding: 0;
}
h1, h2, h3, ul {
    margin: 0;
    padding: 0;
    font-size: 17px;
}
ul {
    list-style: none;
}
svg {
    display: block;
    flex: none;
}
.sprite {
    position: absolute;
    width: 0;
    height: 0;
}
.window {
    flex: 1;
    min-width: 0;
    display: flex;
    flex-direction: column;
    background: #efece0;
    border-bottom: 2px solid #c9c4ae;
}

/* title bar */
.titlebar {
    display: flex;
    align-items: center;
    gap: 5px;
    height: 41px;
    padding: 0 4px 0 1px;
    background: linear-gradient(#e6ebcf, #a3ae7e 25%, #a9b684 60%, #b9ca96 88%, #8e9c70);
}
.titlebar h1 {
    flex: 1;
    color: #f8f8ea;
    font-size: 19px;
    text-shadow: 1px 2px 1px #5b6640;
}
.icon {
    width: 28px;
    height: 28px;
}
.win-btn {
    width: 32px;
    height: 33px;
    border: 2px solid #eef0d8;
    border-radius: 5px;
    background: linear-gradient(135deg, #a9b38a, #7f8b5e);
}
.win-btn svg {
    width: 28px;
    height: 28px;
}
.win-btn.close {
    background: linear-gradient(135deg, #e28a6c, #c83e26);
}

/* menus and toolbars */
.menubar {
    display: flex;
    gap: 25px;
    height: 38px;
    padding: 3px 18px 0;
    align-items: center;
}
.toolbar-row {
    display: flex;
    gap: 3px;
    padding: 0 5px;
    height: 41px;
}
.toolbar-row + .toolbar-row {
    height: 43px;
    border-bottom: 2px solid #a7a891;
}
.toolbar {
    display: flex;
    align-items: center;
    height: 40px;
    border-radius: 4px;
    background: linear-gradient(#f8f6ee, #ece9dc 55%, #d3cfbd 88%, #b9b5a0);
}
.grip {
    width: 11px;
    height: 26px;
    background: radial-gradient(circle, #b7b3a0 1px, transparent 2px) 0 0 / 10px 6px repeat-y;
}
.tool {
    display: flex;
    align-items: center;
    justify-content: center;
    width: 35px;
    height: 34px;
}
.tool.on {
    background: #b6c28e;
    border: 1px solid #8a9668;
}
.sep {
    width: 1px;
    height: 26px;
    margin: 0 5px 0 4px;
    background: #c8c4b2;
}
.caret {
    width: 12px;
    height: 14px;
}
.drop {
    width: 14px;
    height: 34px;
}
.overflow {
    align-self: stretch;
    display: flex;
    align-items: flex-end;
    justify-content: center;
    width: 20px;
    margin-left: 3px;
    padding-bottom: 3px;
    border-radius: 0 4px 4px 0;
    background: linear-gradient(#efece0, #bfbba8);
}
.combo {
    position: relative;
    display: flex;
}
.combo select {
    appearance: none;
    width: 100%;
    height: 30px;
    padding: 0 4px;
    border: 1px solid #a5b08a;
    border-radius: 0;
    background: #fff;
    color: #111;
    font: inherit;
}
.combo-btn {
    position: absolute;
    top: 2px;
    right: 2px;
    width: 23px;
    height: 26px;
    padding: 2px;
    pointer-events: none;
    background: linear-gradient(135deg, #c5cfae, #8d9a72);
}
.scale {
    width: 234px;
    margin-left: 5px;
}
.layer {
    width: 284px;
    margin: 0 4px 0 7px;
}
.layer select {
    border: 2px solid #a19e8d;
    background: #efecdf;
}
.layer .combo-btn {
    padding: 5px;
    color: #aaa695;
    background: #efecdf;
    border-right: 2px solid #b9b5a2;
    border-bottom: 2px solid #b9b5a2;
}
.tool-label {
    padding-left: 4px;
}

/* docked panels */
.workspace {
    flex: 1;
    display: flex;
    min-height: 0;
}
.toc {
    display: flex;
    flex-direction: column;
    width: 400px;
    margin-right: 10px;
}
.panel-title {
    display: flex;
    align-items: center;
    gap: 4px;
    height: 28px;
    padding: 0 4px 0 5px;
    background: #e9e7d9;
}
.panel-title h2 {
    flex: 1;
    font-weight: normal;
}
.panel-title svg {
    width: 20px;
    height: 20px;
    padding: 2px;
}
.panel-tools {
    display: flex;
    align-items: center;
    height: 42px;
    background: linear-gradient(#f6f4ec, #e8e5d8 60%, #c4c1ae);
    border-bottom: 2px solid #a3ad86;
}
.toc .panel-tools {
    padding-left: 6px;
}
.tree {
    flex: 1;
    display: grid;
    grid-auto-rows: 1fr;
    padding: 3px 0 124px;
    background: #fff;
    border: 1px solid #a3a892;
    border-top: none;
}
.tree li {
    display: flex;
    align-items: center;
    white-space: nowrap;
}
.tree label, .tree .name {
    padding: 0 3px;
    line-height: 26px;
}
.l0 {
    padding-left: 13px;
}
.l1 {
    padding-left: 44px;
}
.l2 {
    padding-left: 74px;
}
.l3 {
    padding-left: 125px;
}
.tree .active {
    font-size: 18px;
    font-weight: bold;
}
.frame {
    width: 26px;
    height: 26px;
    margin: 0 4px 0 9px;
}
.exp {
    width: 14px;
    height: 14px;
    border: 2px solid #a19f97;
    border-radius: 3px;
    background: linear-gradient(#111, #111) center / 8px 2px no-repeat, linear-gradient(#111, #111) center / 2px 8px no-repeat, #f4f3ee;
}
.exp.open {
    background: linear-gradient(#111, #111) center / 8px 2px no-repeat, #f4f3ee;
}
.tree input {
    appearance: none;
    position: relative;
    width: 18px;
    height: 18px;
    margin: 0 9px 0 13px;
    border: 2px solid #222;
    background: #fff;
}
.tree input:checked::after {
    content: "";
    position: absolute;
    left: 4px;
    top: 0;
    width: 5px;
    height: 9px;
    border: solid #111;
    border-width: 0 3px 3px 0;
    transform: rotate(40deg);
}
.tree input.dim {
    border-color: #a7a7a7;
    border-bottom-width: 4px;
}
.tree input.dim::after {
    border-color: #bbb;
}
.selected label {
    padding-right: 9px;
    color: #fbfbee;
    background: #919c6d;
}
.swatch {
    width: 24px;
    height: 18px;
    margin-right: 4px;
    border: 1px solid #8c8c8c;
}
.low { background: #fdfd97; border-color: #f4f4a0; }
.moderate { background: #fdcb70; }
.high { background: #cfab6e; }
.commercial { background: #f57475; }
.industrial { background: #cb84f5; }
.m1 { background: #b0d2fd; }
.m2 { background: #6c9cd2; border-color: #4fb0e6; }
.agriculture { background: radial-gradient(circle at 25% 30%, #6f9d5c 20%, #8d857b 45%); }
.institutional { background: #daf1ff; }
.park { background: #c4fbbb; }
.facilities { background: #cbcbcb; }
.openspace { background: radial-gradient(ellipse at 40% 40%, #74d559 30%, #80a887 60%); }
.area { background: #dfdee1; }

/* map view */
.map {
    flex: 1;
    min-width: 0;
    position: relative;
    display: grid;
    grid-template-columns: 1fr 34px;
    grid-template-rows: 1fr 30px;
    background: #fcfcf8;
}
.canvas {
    width: 100%;
    height: 100%;
    min-height: 0;
    border-left: 1px solid #8f8f80;
}
.street {
    fill: #aaa0a5;
    font: italic bold 18px "Liberation Sans", Arial, sans-serif;
}
.street .side {
    font-size: 17px;
}
.city {
    fill: #8c8c8c;
    font: bold 28px "Liberation Serif", "Times New Roman", serif;
}
.hall {
    fill: #b096c6;
    font: 15px "Liberation Sans", Arial, sans-serif;
    text-anchor: middle;
}
.acres {
    font: bold 21px "Liberation Sans", Arial, sans-serif;
    text-anchor: middle;
    paint-order: stroke;
    stroke-linejoin: round;
}
.comm {
    fill: #fff6f2;
    stroke: #e2595e;
    stroke-width: 3px;
}
.area-label {
    fill: #111;
    stroke: #fff;
    stroke-width: 6px;
}
.m1-label {
    fill: #2c4250;
    stroke: #b9daf6;
    stroke-width: 4px;
}
.float {
    position: absolute;
    left: 54px;
    top: 22px;
    padding: 3px 3px 3px 2px;
    border: 2px solid #8b897b;
    background: #f4f2e6;
}
.float-title {
    display: flex;
    align-items: center;
    gap: 4px;
    height: 26px;
    padding: 0 4px 0 2px;
    background: #aaa795;
    color: #fff;
}
.float-title h2 {
    flex: 1;
}
.float-title svg {
    width: 18px;
    height: 18px;
    padding: 1px;
}
.float-tools {
    display: flex;
    align-items: center;
    height: 34px;
    background: linear-gradient(#faf8f0, #e8e5d8 60%, #cfccbb);
}
.vscroll {
    display: flex;
    flex-direction: column;
    align-items: flex-start;
    padding: 3px 0 1px 4px;
    border-right: 2px solid #e4e2d2;
}
.hscroll {
    grid-column: 1 / 3;
    display: flex;
    align-items: center;
    padding: 0 35px 0 1px;
}
.hscroll .sep {
    margin: 0 4px 0 8px;
}
.track {
    flex: 1;
    display: flex;
    justify-content: center;
    align-items: center;
}
.vscroll .track {
    width: 24px;
    padding-bottom: 196px;
}
.hscroll .track {
    height: 24px;
    padding-left: 10px;
}
.thumb {
    width: 24px;
    height: 14px;
    border: 1px solid #6d8050;
    border-radius: 3px;
    background: linear-gradient(#b8c79c, #84966a);
}
.hscroll .thumb {
    width: 10px;
    height: 24px;
}
.scroll-btn {
    width: 24px;
    height: 26px;
    border: 2px solid #dfe6cd;
    outline: 1px solid #93a17a;
    outline-offset: -1px;
    border-radius: 3px;
    background: linear-gradient(135deg, #bcc8a2, #7f9064);
}
.scroll-btn svg {
    width: 20px;
    height: 20px;
}
.view + .scroll-btn {
    margin-left: 3px;
}
.up {
    transform: rotate(180deg);
}
.left {
    transform: rotate(90deg);
}
.right {
    transform: rotate(270deg);
}
.view {
    width: 27px;
    height: 26px;
}
.view svg {
    width: 20px;
    height: 20px;
    margin: 0 auto;
}
.view.on {
    border-right: 2px solid #777;
    border-bottom: 2px solid #777;
}

/* create features */
.create {
    position: relative;
    display: flex;
    flex-direction: column;
    width: 341px;
    margin-left: 4px;
}
.create .panel-tools {
    padding-left: 7px;
}
.search {
    width: 104px;
    height: 28px;
    margin-left: 4px;
    padding: 0 4px;
    border: none;
    background: #fff;
    font: inherit;
}
.search::placeholder {
    color: #999;
}
.search + .drop {
    width: 22px;
    padding: 0 5px;
}
.templates {
    flex: 1;
    background: #fff;
    border: 1px solid #b5ba94;
}
.templates h3, .construct-head h2 {
    font-size: 18px;
}
.templates h3 {
    padding: 7px 0 3px 23px;
    border-bottom: 1px solid #d5d2c8;
}
.templates ul {
    padding: 17px 0 29px 23px;
}
.templates ul + h3 {
    padding-top: 0;
}
.templates li {
    display: flex;
    align-items: center;
    gap: 2px;
    height: 27px;
}
.templates .street-list {
    padding-bottom: 0;
}
.box {
    width: 24px;
    height: 24px;
    border: 2px solid #44555c;
}
.box.area { border: 1px solid #77777c; }
.box.line { border: none; }
.b-commercial { background: #f40000; border-color: #a01010; }
.b-industrial { background: #a020f0; border-color: #5b1a86; }
.b-institutional { background: #b9e2fd; border-color: #3a6a94; }
.b-m1 { background: #73aefb; border-color: #2f6db0; }
.b-m2 { background: #0b50a5; border-color: #0c66b8; }
.b-park { background: #98f98c; border-color: #2f7052; }
.b-low { background: #fdfd62; border-color: #e4e45a; }
.b-moderate { background: #ffa60a; border-color: #8a6417; }
.b-high { background: #a26a05; border-color: #6d4e17; }
.templates .picked span:last-child {
    padding-right: 5px;
    line-height: 25px;
    background: #ece9d8;
}
.splitter {
    display: flex;
    align-items: center;
    justify-content: flex-end;
    gap: 1px;
    height: 24px;
}
.splitter .bar {
    width: 114px;
    height: 2px;
    margin-right: 74px;
    background: #a9abb0;
}
.splitter button {
    width: 18px;
    height: 18px;
    border: 2px solid #222;
    background: #fff;
}
.splitter svg {
    width: 14px;
    height: 14px;
}
.construct-head {
    display: flex;
    align-items: center;
    height: 41px;
    background: #ece8d9;
    border-top: 1px solid #a9a792;
}
.construct-head .icon {
    align-self: flex-start;
    width: 27px;
}
.construct-head h2 {
    padding-top: 7px;
}
.construct {
    padding: 13px 18px 0;
    border-left: 1px solid #a0a0a0;
    background: #fff;
}
.construct li {
    display: flex;
    align-items: center;
    gap: 12px;
    height: 31px;
    padding-left: 2px;
    border: 1px solid transparent;
}
.construct .picked {
    height: 32px;
    background: #ebe8d8;
    border-color: #a5a294;
}
.construct svg {
    width: 26px;
    height: 26px;
}
.more {
    position: absolute;
    right: 7px;
    bottom: 3px;
    width: 26px;
    height: 24px;
    background: #f2efe4;
    border-right: 2px solid #b5b2a2;
    border-bottom: 2px solid #b5b2a2;
}
.more svg {
    width: 20px;
    height: 20px;
    margin: 0 auto;
}
.tabs {
    display: flex;
    flex-direction: column;
    gap: 24px;
    width: 31px;
    margin-left: 4px;
    padding-top: 2px;
}
.tabs a {
    display: flex;
    align-items: center;
    gap: 6px;
    padding: 6px 0 10px;
    border: 2px solid #c2bfae;
    border-right: none;
    border-radius: 6px 0 0 6px;
    background: #f5f3ea;
    color: #6b6b66;
    text-decoration: none;
    writing-mode: vertical-rl;
}
.tabs svg {
    width: 26px;
    height: 26px;
}

/* editor bar and status */
.bottom {
    justify-content: flex-end;
    padding: 2px 148px 0 0;
    height: 44px;
}
.menu-btn {
    display: flex;
    align-items: center;
    gap: 3px;
    padding: 0 3px 0 5px;
}
.status {
    display: flex;
    justify-content: space-between;
    align-items: center;
    height: 29px;
    padding: 3px 112px 0 3px;
}
```
